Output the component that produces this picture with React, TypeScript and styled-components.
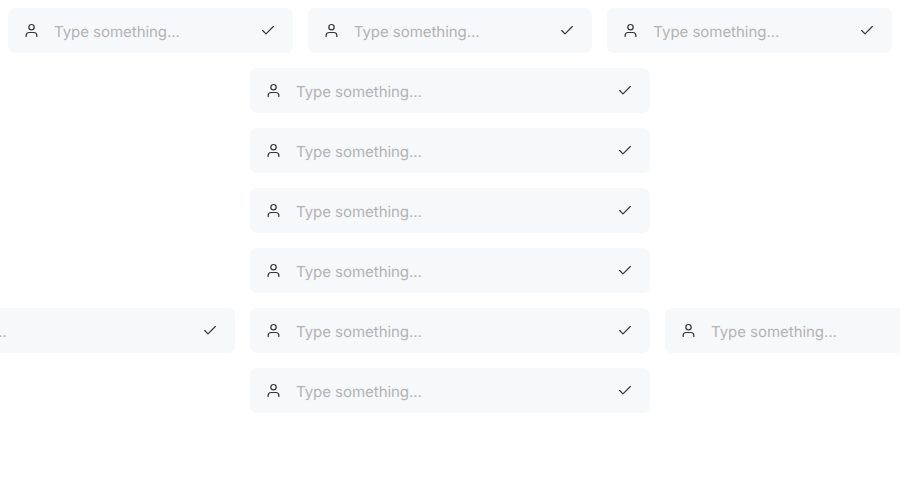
import React from "react";
import styled, { createGlobalStyle } from "styled-components";

const GlobalStyle = createGlobalStyle`
  * { box-sizing: border-box; }
  html, body { margin: 0; background: #fff; overflow: hidden; }
`;

const Page = styled.main`
  display: flex;
  flex-direction: column;
  align-items: center;
  gap: 15px;
  height: 500px;
  padding: 8px;
  overflow: hidden;
`;

const Row = styled.div<{ $fill?: boolean }>`
  display: flex;
  justify-content: center;
  gap: 15px;
  width: ${(p) => (p.$fill ? "100%" : "1230px")};
  flex: none;
`;

const Field = styled.label<{ $fill?: boolean }>`
  display: flex;
  align-items: center;
  flex: ${(p) => (p.$fill ? "1 1 0" : "0 0 400px")};
  min-width: 0;
  height: 45px;
  padding: 0 17px 0 15px;
  border-radius: 7px;
  background: #f7f8fa;
`;

const Input = styled.input`
  flex: 1;
  min-width: 0;
  height: 100%;
  margin: 0 14px;
  padding: 2px 0 0;
  border: 0;
  outline: 0;
  background: transparent;
  color: #333;
  font: 400 15px Inter, sans-serif;
  letter-spacing: -0.04px;
  text-rendering: geometricPrecision;
  &::placeholder { color: #b3b3b4; opacity: 1; }
`;

const Icon = styled.svg`
  flex: none;
  display: block;
  color: #333;
`;

const UserIcon = () => (
  <Icon width="17" height="17" viewBox="-0.75 -0.75 25.5 25.5" fill="none" stroke="currentColor" strokeWidth="1.85" strokeLinecap="round" strokeLinejoin="round">
    <path d="M20 21v-1.5a4.5 4.5 0 0 0-4.5-4.5h-7A4.5 4.5 0 0 0 4 19.500V21" />
    <circle cx="12" cy="7" r="4" />
  </Icon>
);

const CheckIcon = () => (
  <Icon width="16" height="17" viewBox="0 -0.75 24 25.5" fill="none" stroke="currentColor" strokeWidth="1.75" strokeLinecap="round" strokeLinejoin="round">
    <path d="M20 6 9 17l-5-5" />
  </Icon>
);

const TextField = ({ fill }: { fill?: boolean }) => (
  <Field $fill={fill}>
    <UserIcon />
    <Input placeholder="Type something..." />
    <CheckIcon />
  </Field>
);

const rows = [3, 1, 1, 1, 1, 3, 1];

export default function App() {
  return (
    <>
      <GlobalStyle />
      <Page>
        {rows.map((count, row) => (
          <Row key={row} $fill={row === 0}>
            {Array.from({ length: count }, (_, i) => (
              <TextField key={i} fill={row === 0} />
            ))}
          </Row>
        ))}
      </Page>
    </>
  );
}
